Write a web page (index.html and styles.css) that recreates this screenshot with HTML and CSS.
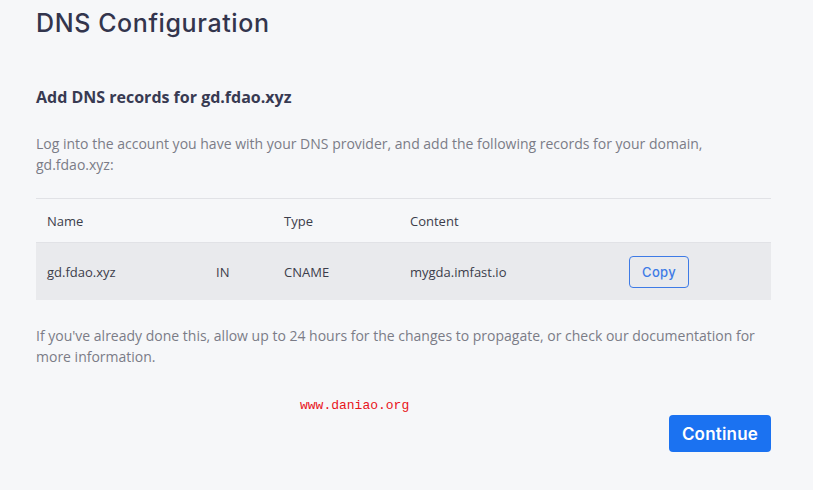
FILE: index.html
```html
<!DOCTYPE html>
<html>
<head>
<meta charset="utf-8">
<link rel="stylesheet" href="styles.css">
</head>
<body>
<div class="page">
  <h1 class="title">DNS Configuration</h1>
  <h2 class="subtitle">Add DNS records for gd.fdao.xyz</h2>
  <p class="text">Log into the account you have with your DNS provider, and add the following records for your domain, gd.fdao.xyz:</p>
  <div class="table">
    <div class="row head">
      <div class="c-name">Name</div>
      <div class="c-in"></div>
      <div class="c-type">Type</div>
      <div class="c-content">Content</div>
      <div class="c-act"></div>
    </div>
    <div class="row body">
      <div class="c-name">gd.fdao.xyz</div>
      <div class="c-in">IN</div>
      <div class="c-type">CNAME</div>
      <div class="c-content">mygda.imfast.io</div>
      <div class="c-act"><button class="copy">Copy</button></div>
    </div>
  </div>
  <p class="text note">If you've already done this, allow up to 24 hours for the changes to propagate, or check our documentation for more information.</p>
  <div class="footer">
    <span class="mark">www.daniao.org</span>
    <button class="continue">Continue</button>
  </div>
</div>
</body>
</html>
```
FILE: styles.css
```css
html, body { margin: 0; padding: 0; background: #f6f7f9; }
.page { padding: 6px 42px 0 36px; font-family: "Open Sans", sans-serif; }
.title { margin: 0; font-family: Inter, sans-serif; font-weight: 500; font-size: 25px; line-height: 34px; color: #33354d; letter-spacing: 0.6px; }
.subtitle { margin: 46px 0 0; font-family: "Open Sans", sans-serif; font-weight: 700; font-size: 16px; line-height: 23px; color: #383a52; }
.text { margin: 24px 0 0; font-size: 14px; line-height: 21px; color: #7b7c87; }
.table { margin-top: 23px; border-top: 1px solid #e1e2e6; }
.row { display: grid; grid-template-columns: 169px 68px 126px 219px 1fr; align-items: center; padding-left: 11px; font-size: 13px; color: #3c3d4b; }
.head { height: 43px; border-bottom: 1px solid #e1e2e6; }
.body { height: 57px; background: #e9eaed; }
.copy { font-family: Inter, sans-serif; font-weight: 500; font-size: 13px; color: #3e7be6; background: transparent; border: 1px solid #3e7be6; border-radius: 4px; width: 60px; height: 32px; padding: 0; letter-spacing: 0.3px; }
.note { margin-top: 25px; }
.footer { display: flex; justify-content: space-between; align-items: flex-start; margin-top: 30px; }
.mark { margin: 0 0 0 264px; font-family: "Liberation Mono", monospace; font-size: 13px; color: #e8141b; line-height: 18px; }
.continue { margin-top: 18px; font-family: Inter, sans-serif; font-weight: 600; font-size: 17px; color: #fff; background: #1b72f1; border: none; border-radius: 4px; width: 102px; height: 37px; padding: 0; letter-spacing: 0.2px; }
```
